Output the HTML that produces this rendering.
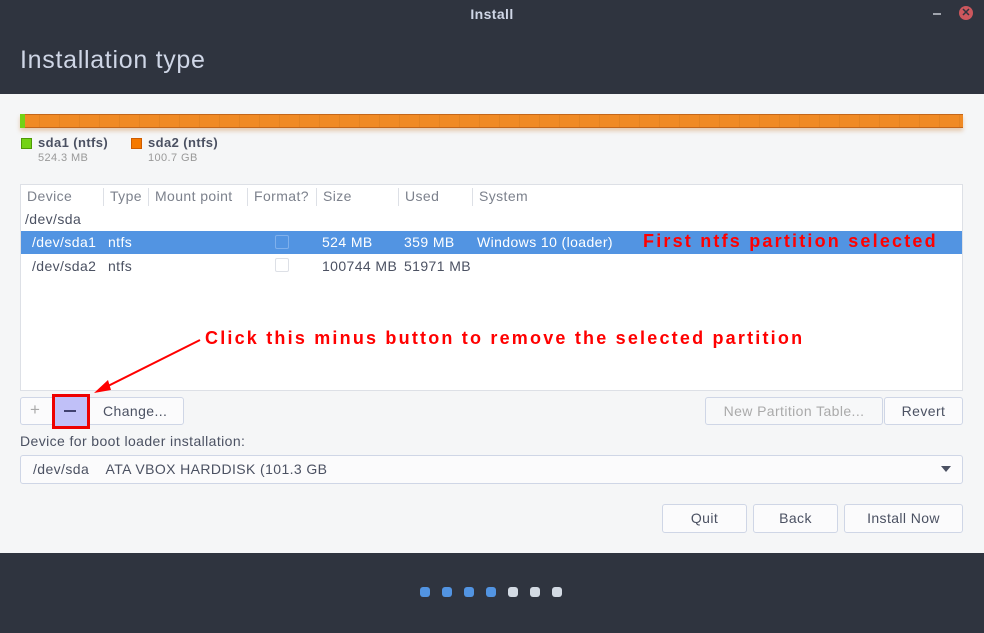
<!DOCTYPE html><html><head><style>
*{box-sizing:border-box}body{margin:0;width:984px;height:633px;overflow:hidden;font-family:"Liberation Sans",sans-serif;background:#2f343f;position:relative;font-size:14px;color:#4b5162;letter-spacing:0.4px}
.a{position:absolute}
.btn{position:absolute;border:1px solid #cfd6e6;border-radius:3px;background:#fbfbfc;text-align:center;line-height:26px;font-size:14px;color:#4b5162}
.hd{position:absolute;top:188px;font-size:14px;color:#7c818c}
.sep{position:absolute;top:188px;width:1px;height:18px;background:#dde0e6}
.dot{position:absolute;top:587px;width:10px;height:10px;border-radius:3px}
.red{color:#f00;font-weight:bold;font-size:18px;letter-spacing:2.2px}
</style></head><body>
<div class="a" style="top:6px;width:984px;text-align:center;color:#cfd6e6;font-weight:bold;font-size:14px">Install</div>
<div class="a" style="left:933px;top:13px;width:8px;height:2px;background:#a0a4ad"></div>
<div class="a" style="left:959px;top:6px;width:14px;height:14px;border-radius:7px;background:#cc575d;color:#2f343f;font-size:11px;line-height:14px;text-align:center;font-weight:bold;letter-spacing:0">✕</div>
<div class="a" style="left:20px;top:46px;font-size:25px;color:#cfd6e6;letter-spacing:0.7px">Installation type</div>
<div class="a" style="top:94px;left:0;width:984px;height:459px;background:#f5f6f7"></div>
<div class="a" style="left:20px;top:114px;width:943px;height:14px;background:repeating-linear-gradient(90deg,#f08a24 0 19px,#e58320 19px 20px);border-top:1px solid #c4661a;border-bottom:1px solid #c4661a;box-shadow:0 3px 4px rgba(200,120,40,.35)"></div>
<div class="a" style="left:20px;top:114px;width:5px;height:14px;background:#73d216"></div>
<div class="a" style="left:21px;top:138px;width:11px;height:11px;background:#73d216;border:1px solid #4e9a06"></div>
<div class="a" style="left:38px;top:135px;font-weight:bold;font-size:13px">sda1 (ntfs)</div>
<div class="a" style="left:38px;top:152px;font-size:11px;color:#999">524.3 MB</div>
<div class="a" style="left:131px;top:138px;width:11px;height:11px;background:#f57900;border:1px solid #ce5c00"></div>
<div class="a" style="left:148px;top:135px;font-weight:bold;font-size:13px">sda2 (ntfs)</div>
<div class="a" style="left:148px;top:152px;font-size:11px;color:#999">100.7 GB</div>
<div class="a" style="left:20px;top:184px;width:943px;height:207px;background:#fff;border:1px solid #dde0e6"></div>
<div class="hd" style="left:27px">Device</div><div class="sep" style="left:103px"></div>
<div class="hd" style="left:110px">Type</div><div class="sep" style="left:148px"></div>
<div class="hd" style="left:155px">Mount point</div><div class="sep" style="left:247px"></div>
<div class="hd" style="left:254px">Format?</div><div class="sep" style="left:316px"></div>
<div class="hd" style="left:323px">Size</div><div class="sep" style="left:398px"></div>
<div class="hd" style="left:405px">Used</div><div class="sep" style="left:472px"></div>
<div class="hd" style="left:479px">System</div>
<div class="a" style="left:25px;top:211px">/dev/sda</div>
<div class="a" style="left:21px;top:231px;width:941px;height:23px;background:#5294e2"></div>
<div class="a" style="left:32px;top:234px;color:#fff">/dev/sda1</div>
<div class="a" style="left:108px;top:234px;color:#fff">ntfs</div>
<div class="a" style="left:275px;top:235px;width:14px;height:14px;border:1px solid #7fb0ec;border-radius:2px;background:#5294e2"></div>
<div class="a" style="left:322px;top:234px;color:#fff">524 MB</div>
<div class="a" style="left:404px;top:234px;color:#fff">359 MB</div>
<div class="a" style="left:477px;top:234px;color:#fff">Windows 10 (loader)</div>
<div class="a red" style="left:643px;top:231px">First ntfs partition selected</div>
<div class="a" style="left:32px;top:258px">/dev/sda2</div>
<div class="a" style="left:108px;top:258px">ntfs</div>
<div class="a" style="left:275px;top:258px;width:14px;height:14px;border:1px solid #dde0e6;border-radius:2px"></div>
<div class="a" style="left:322px;top:258px">100744 MB</div>
<div class="a" style="left:404px;top:258px">51971 MB</div>
<div class="a red" style="left:205px;top:328px">Click this minus button to remove the selected partition</div>
<svg class="a" style="left:0;top:0" width="984" height="633"><line x1="200" y1="340" x2="100" y2="390" stroke="#f00" stroke-width="2"/><polygon points="94,393 108,380 111,390" fill="#f00"/></svg>
<div class="btn" style="left:20px;top:397px;width:164px;height:28px"></div>
<div class="a" style="left:30px;top:400px;color:#aaa;font-size:17px">+</div>
<div class="a" style="left:52px;top:394px;width:38px;height:35px;border:3px solid #e00;background:#c0c0f8"></div>
<div class="a" style="left:64px;top:410px;width:12px;height:2px;background:#404070"></div>
<div class="a" style="left:103px;top:403px">Change...</div>
<div class="btn" style="left:705px;top:397px;width:178px;height:28px;color:#aaa;background:#f7f8f9">New Partition Table...</div>
<div class="btn" style="left:884px;top:397px;width:79px;height:28px">Revert</div>
<div class="a" style="left:20px;top:433px">Device for boot loader installation:</div>
<div class="btn" style="left:20px;top:455px;width:943px;height:29px;text-align:left;padding-left:12px;line-height:27px">/dev/sda&nbsp;&nbsp;&nbsp; ATA VBOX HARDDISK (101.3 GB</div>
<div class="a" style="left:941px;top:466px;border-left:5px solid transparent;border-right:5px solid transparent;border-top:6px solid #4b5162"></div>
<div class="btn" style="left:662px;top:504px;width:85px;height:29px">Quit</div>
<div class="btn" style="left:753px;top:504px;width:85px;height:29px">Back</div>
<div class="btn" style="left:844px;top:504px;width:119px;height:29px">Install Now</div>
<div class="dot" style="left:420px;background:#5294e2"></div>
<div class="dot" style="left:442px;background:#5294e2"></div>
<div class="dot" style="left:464px;background:#5294e2"></div>
<div class="dot" style="left:486px;background:#5294e2"></div>
<div class="dot" style="left:508px;background:#d3dae3"></div>
<div class="dot" style="left:530px;background:#d3dae3"></div>
<div class="dot" style="left:552px;background:#d3dae3"></div>
</body></html>
